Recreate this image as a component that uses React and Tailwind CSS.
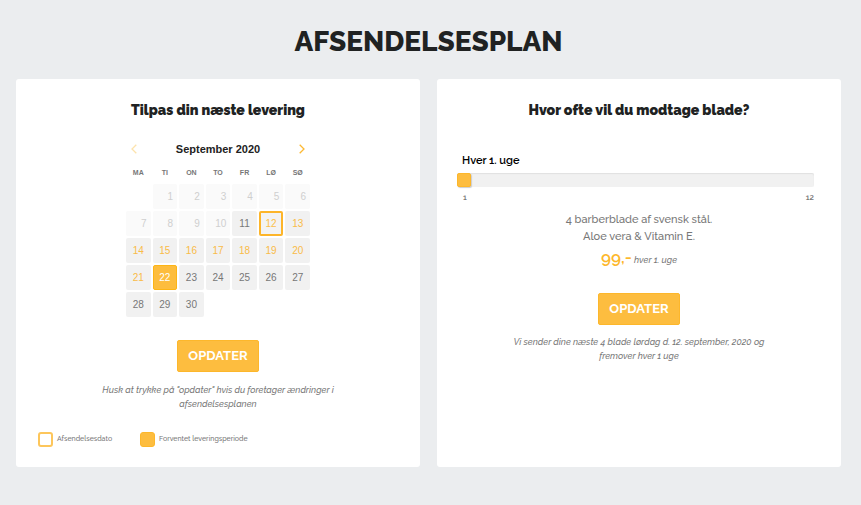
import React, { useState } from "react";

const weekdays = ["MA", "TI", "ON", "TO", "FR", "LØ", "SØ"];

const weeks = [
  [null, 1, 2, 3, 4, 5, 6],
  [7, 8, 9, 10, 11, 12, 13],
  [14, 15, 16, 17, 18, 19, 20],
  [21, 22, 23, 24, 25, 26, 27],
  [28, 29, 30, null, null, null, null],
];

const firstOpenDay = 11;
const shippingDay = 12;
const lastDeliveryDay = 21;

const getDayClass = (day, selected) => {
  if (day < firstOpenDay) {
    return "bg-[#fafafa] pr-1 text-right text-[#cfcfcf]";
  }
  if (day === selected) {
    return "border border-[#fdb515] bg-[#fdbd3d] text-center text-white";
  }
  if (day === shippingDay) {
    return "border-2 border-[#fdb52a] bg-[#f3f3f3] text-center text-[#fbbf4b]";
  }
  if (day > shippingDay && day <= lastDeliveryDay) {
    return "bg-[#f1f1f1] text-center text-[#f9bb48]";
  }
  return "bg-[#f1f1f1] text-center text-[#777777]";
};

const Chevron = ({ direction }) => (
  <svg viewBox="0 0 6 10" className="h-[10px] w-[6px]" fill="none" stroke="currentColor" strokeWidth="1.3">
    <path d={direction === "left" ? "M5.3 0.7 1 5l4.3 4.3" : "M0.7 0.7 5 5 0.7 9.3"} />
  </svg>
);

const UpdateButton = () => (
  <button
    type="button"
    className="h-8 w-[82px] rounded-[2px] border border-[#fdb72b] bg-[#fdbd3f] text-[13px] leading-4 font-bold text-white"
  >
    OPDATER
  </button>
);

const Calendar = () => {
  const [selected, setSelected] = useState(22);

  return (
    <div className="mx-auto mt-[21px] w-[188px] font-['Liberation_Sans',Arial,sans-serif]">
      <div className="flex h-4 items-center justify-between px-[7px]">
        <button type="button" aria-label="Forrige måned" disabled className="text-[#fde3ac]">
          <Chevron direction="left" />
        </button>
        <h3 className="text-[11px] leading-4 font-bold text-[#222222]">September 2020</h3>
        <button type="button" aria-label="Næste måned" className="text-[#fdb933]">
          <Chevron direction="right" />
        </button>
      </div>

      <table className="mt-2 w-full table-fixed border-separate border-spacing-[2px]">
        <thead>
          <tr>
            {weekdays.map((name) => (
              <th key={name} className="p-0 pb-[3px] text-[7px] leading-3 font-bold text-[#777777]">
                {name}
              </th>
            ))}
          </tr>
        </thead>
        <tbody>
          {weeks.map((week) => (
            <tr key={week[6] || "last"}>
              {week.map((day, index) => (
                <td key={index} className="p-0">
                  {day && (
                    <button
                      type="button"
                      disabled={day < firstOpenDay}
                      onClick={() => setSelected(day)}
                      className={`block h-[25px] w-full rounded-[2px] text-[10px] leading-3 ${getDayClass(day, selected)}`}
                    >
                      {day}
                    </button>
                  )}
                </td>
              ))}
            </tr>
          ))}
        </tbody>
      </table>
    </div>
  );
};

const App = () => {
  const [interval, setInterval] = useState(1);

  return (
    <main className="min-h-screen bg-[#ebedef] pt-[26px] pr-5 pb-9 pl-4 font-['Raleway','Lato',sans-serif] text-[#202222]">
      <h1 className="text-center text-[28px] leading-8 font-extrabold">AFSENDELSESPLAN</h1>

      <div className="mt-[21px] grid grid-cols-2 gap-[17px]">
        <section className="rounded-[3px] bg-white px-[22px] pt-[21px] pb-5">
          <h2 className="text-center text-[14px] leading-5 font-black">Tilpas din næste levering</h2>
          <Calendar />

          <div className="mt-[21px] text-center">
            <UpdateButton />
            <p className="mx-auto mt-[11px] max-w-[250px] text-[9px] leading-[14px] font-medium text-[#777777] italic">
              Husk at trykke på "opdater" hvis du foretager ændringer i afsendelsesplanen
            </p>
          </div>

          <div className="mt-5 flex gap-7 text-[7px] leading-4 font-medium text-[#777777]">
            <div className="flex items-center gap-1">
              <span className="h-[15px] w-[15px] rounded-[3px] border-2 border-[#fdc65b]" />
              Afsendelsesdato
            </div>
            <div className="flex items-center gap-1">
              <span className="h-[15px] w-[15px] rounded-[3px] border border-[#fdb72b] bg-[#fdbd3f]" />
              Forventet leveringsperiode
            </div>
          </div>
        </section>

        <section className="rounded-[3px] bg-white px-5 pt-[21px] pb-5">
          <h2 className="text-center text-[14px] leading-5 font-black">Hvor ofte vil du modtage blade?</h2>

          <div className="mt-[31px] pr-[7px]">
            <label htmlFor="interval" className="block pl-[5px] text-[11px] leading-5 font-semibold text-black">
              {`Hver ${interval}. uge`}
            </label>
            <input
              id="interval"
              type="range"
              min="1"
              max="12"
              value={interval}
              onChange={(event) => setInterval(Number(event.target.value))}
              className="mt-[2px] block h-[14px] w-full appearance-none rounded-[2px] bg-[#f1f1f1] shadow-[inset_0_1px_1px_#e0e0e0] [&::-webkit-slider-thumb]:h-[14px] [&::-webkit-slider-thumb]:w-[14px] [&::-webkit-slider-thumb]:appearance-none [&::-webkit-slider-thumb]:rounded-[2px] [&::-webkit-slider-thumb]:border [&::-webkit-slider-thumb]:border-solid [&::-webkit-slider-thumb]:border-[#fdb72b] [&::-webkit-slider-thumb]:bg-[#fdbd3f] [&::-webkit-slider-thumb]:shadow-[1px_1px_1px_#cccccc]"
            />
            <div className="mt-1 flex justify-between pl-[6px] text-[8px] leading-3 font-semibold text-[#777777]">
              <span>1</span>
              <span>12</span>
            </div>
          </div>

          <div className="mt-2 text-center text-[#777777]">
            <p className="text-[11px] leading-[17px] font-medium">
              4 barberblade af svensk stål.
              <br />
              Aloe vera &amp; Vitamin E.
            </p>
            <p className="text-[9px] leading-6 font-medium italic">
              <span className="text-[17px] font-semibold text-[#fdb72b] not-italic">99,-</span>
              {` hver ${interval}. uge`}
            </p>
            <div className="mt-[21px]">
              <UpdateButton />
            </div>
            <p className="mx-auto mt-[10px] max-w-[270px] text-[9px] leading-[14px] font-medium italic">
              {`Vi sender dine næste 4 blade lørdag d. 12. september, 2020 og fremover hver ${interval} uge`}
            </p>
          </div>
        </section>
      </div>
    </main>
  );
};

export default App;
